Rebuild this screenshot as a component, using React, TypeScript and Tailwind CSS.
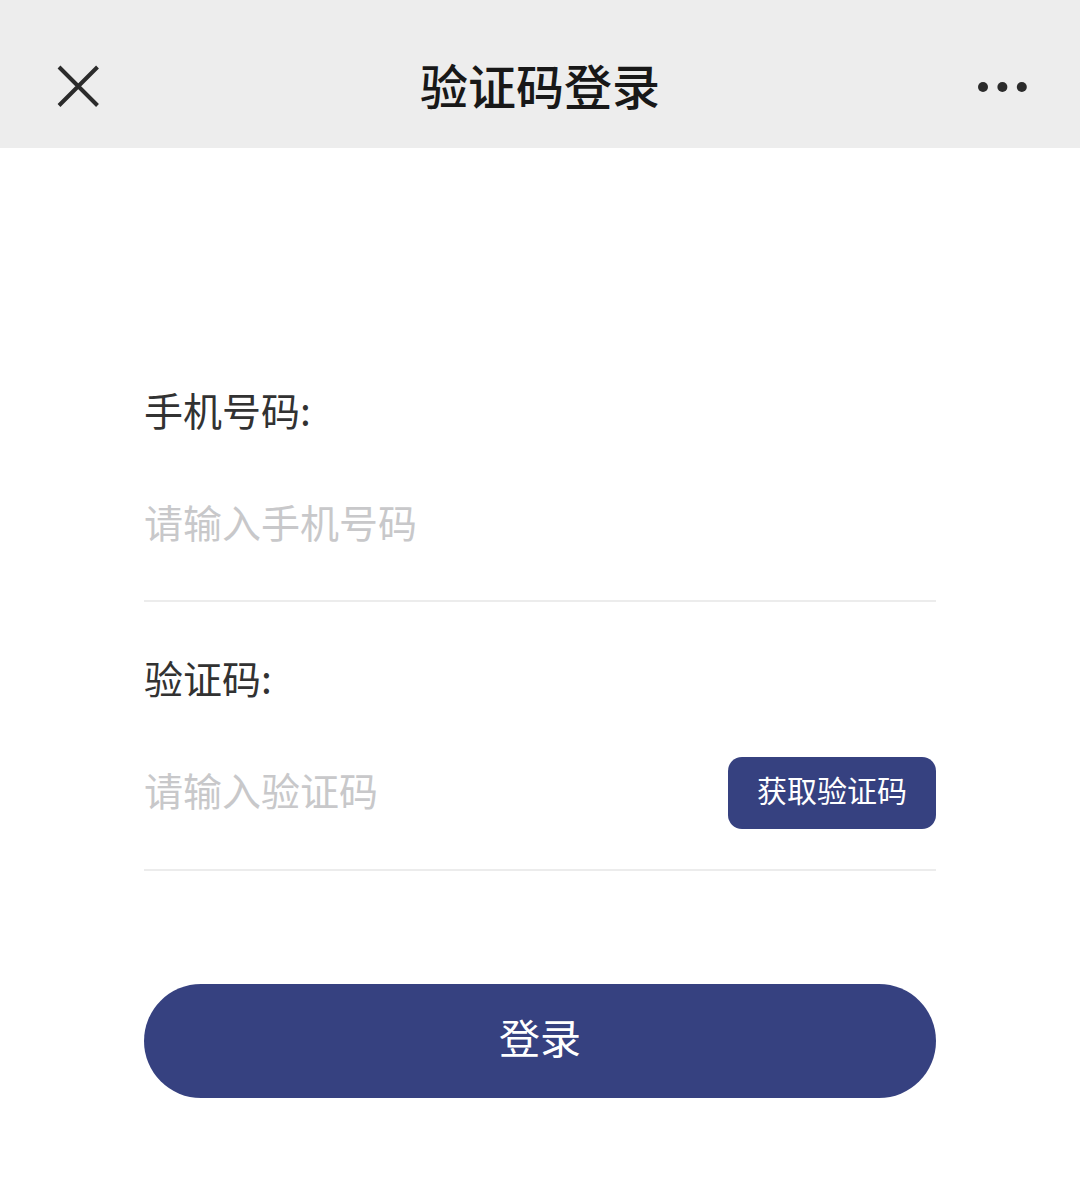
import { useState } from "react";

// ---------------------------------------------------------------------------
// Icons
// ---------------------------------------------------------------------------

function CloseIcon() {
  return (
    <svg width="44" height="44" viewBox="0 0 44 44" fill="none" aria-hidden="true">
      <path d="M3 3 41.5 41.5M41.5 3 3 41.5" stroke="#2b2b2b" strokeWidth="4" />
    </svg>
  );
}

function MoreIcon() {
  return (
    <svg width="50" height="12" viewBox="0 0 50 12" fill="#2b2b2b" aria-hidden="true">
      <circle cx="5" cy="7" r="5" />
      <circle cx="24.4" cy="7" r="5" />
      <circle cx="43.8" cy="7" r="5" />
    </svg>
  );
}

// ---------------------------------------------------------------------------
// Page
// ---------------------------------------------------------------------------

export default function App() {
  const [phone, setPhone] = useState("");
  const [code, setCode] = useState("");

  return (
    <div
      lang="zh-CN"
      className="min-h-screen bg-white font-['Noto_Sans_CJK_SC',sans-serif] text-[#323232]"
    >
      <header className="flex items-center justify-between bg-[#ededed] px-[52px] pt-12 pb-6">
        <div className="flex flex-1">
          <button type="button" aria-label="关闭" className="p-1">
            <CloseIcon />
          </button>
        </div>
        <h1 className="pb-1 text-[48px] leading-[72px] font-medium text-[#181818]">验证码登录</h1>
        <div className="flex flex-1 justify-end">
          <button type="button" aria-label="更多">
            <MoreIcon />
          </button>
        </div>
      </header>

      <form className="px-36 pt-[231px] pb-[94px]" onSubmit={(e) => e.preventDefault()}>
        {/* Phone number */}
        <div className="border-b-2 border-[#ececec] pb-[45px]">
          <label htmlFor="phone" className="block text-[39px] leading-[60px]">
            手机号码:
          </label>
          <input
            id="phone"
            type="tel"
            value={phone}
            onChange={(e) => setPhone(e.target.value)}
            placeholder="请输入手机号码"
            className="mt-14 block h-[60px] w-full pb-2 text-[39px] leading-[52px] outline-none placeholder:text-[#c8c8ca]"
          />
        </div>

        {/* Verification code */}
        <div className="mt-[45px] border-b-2 border-[#ececec] pb-10">
          <label htmlFor="code" className="block text-[39px] leading-[60px]">
            验证码:
          </label>
          <div className="mt-[50px] flex items-center gap-6">
            <input
              id="code"
              type="text"
              value={code}
              onChange={(e) => setCode(e.target.value)}
              placeholder="请输入验证码"
              className="block h-[60px] min-w-0 flex-1 pb-2 text-[39px] leading-[52px] outline-none placeholder:text-[#c8c8ca]"
            />
            <button
              type="button"
              className="h-[72px] w-[208px] rounded-[14px] bg-[#364180] pb-2 text-[30px] text-white"
            >
              获取验证码
            </button>
          </div>
        </div>

        <button
          type="submit"
          className="mt-[113px] h-[114px] w-full rounded-full bg-[#364180] pb-2 text-[41px] text-white"
        >
          登录
        </button>
      </form>
    </div>
  );
}
